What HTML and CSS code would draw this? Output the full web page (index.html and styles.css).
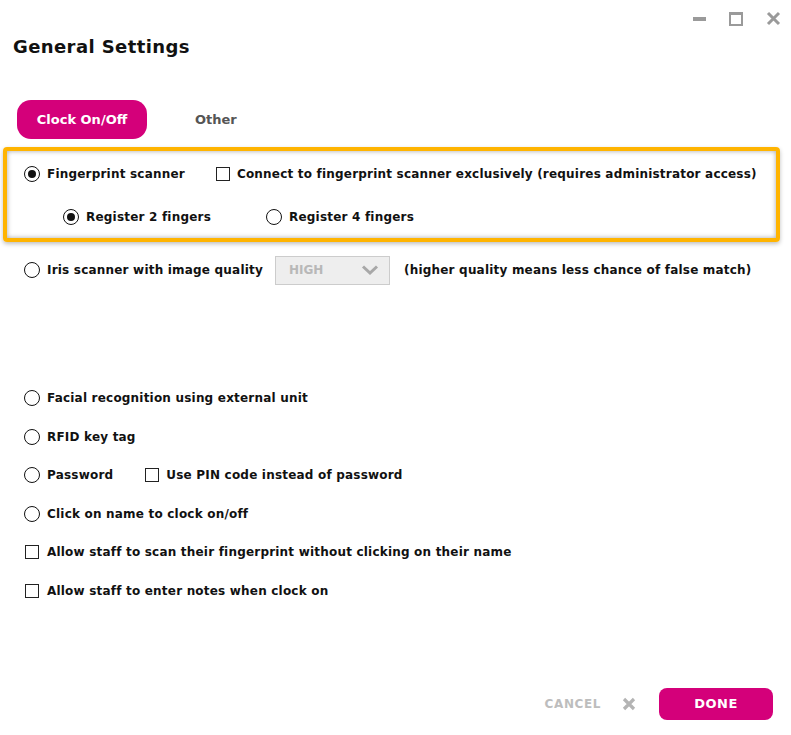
FILE: index.html
```html
<!DOCTYPE html>
<html lang="en">

<head>
    <meta charset="UTF-8">
    <meta name="viewport" content="width=device-width, initial-scale=1.0">
    <title>General Settings</title>
    <link rel="stylesheet" href="styles.css">
</head>

<body>
    <div class="window">
        <div class="window-controls">
            <span class="win-min"></span>
            <span class="win-max"></span>
            <svg class="win-close" width="15" height="15" viewBox="0 0 15 15">
                <path d="M2 2 L13 13 M13 2 L2 13" stroke="#9a9a9a" stroke-width="3" />
            </svg>
        </div>

        <h2 class="title">General Settings</h2>

        <div class="tabs">
            <span class="tab active">Clock On/Off</span>
            <span class="tab">Other</span>
        </div>

        <div class="highlight">
            <div class="row">
                <span class="radio checked"></span>
                <span class="label">Fingerprint scanner</span>
                <span class="check check-exclusive"></span>
                <span class="label">Connect to fingerprint scanner exclusively (requires administrator access)</span>
            </div>
            <div class="row sub-row">
                <span class="radio checked"></span>
                <span class="label fingers-2">Register 2 fingers</span>
                <span class="radio"></span>
                <span class="label">Register 4 fingers</span>
            </div>
        </div>

        <div class="row iris-row">
            <span class="radio"></span>
            <span class="label">Iris scanner with image quality</span>
            <div class="select">
                <span>HIGH</span>
                <svg width="18" height="10" viewBox="0 0 18 10">
                    <path d="M2 1.5 L9 8 L16 1.5" fill="none" stroke="#a8a8a8" stroke-width="3" />
                </svg>
            </div>
            <span class="label">(higher quality means less chance of false match)</span>
        </div>

        <div class="options">
            <div class="row">
                <span class="radio"></span>
                <span class="label">Facial recognition using external unit</span>
            </div>
            <div class="row">
                <span class="radio"></span>
                <span class="label">RFID key tag</span>
            </div>
            <div class="row">
                <span class="radio"></span>
                <span class="label">Password</span>
                <span class="check check-pin"></span>
                <span class="label">Use PIN code instead of password</span>
            </div>
            <div class="row">
                <span class="radio"></span>
                <span class="label">Click on name to clock on/off</span>
            </div>
            <div class="row">
                <span class="check check-left"></span>
                <span class="label">Allow staff to scan their fingerprint without clicking on their name</span>
            </div>
            <div class="row">
                <span class="check check-left"></span>
                <span class="label">Allow staff to enter notes when clock on</span>
            </div>
        </div>

        <div class="footer">
            <span class="cancel">CANCEL</span>
            <svg class="cancel-x" width="14" height="14" viewBox="0 0 14 14">
                <path d="M2 2 L12 12 M12 2 L2 12" stroke="#b4b4b4" stroke-width="3.2" />
            </svg>
            <span class="done">DONE</span>
        </div>
    </div>
</body>

</html>
```

FILE: styles.css
```css
* {
    box-sizing: border-box;
}

html,
body {
    margin: 0;
    padding: 0;
    background: #fff;
}

body {
    font-family: "DejaVu Sans", "Noto Sans", sans-serif;
    color: #111;
}

.window {
    width: 791px;
    height: 735px;
    display: flex;
    flex-direction: column;
    position: relative;
}

.window-controls {
    position: absolute;
    top: 11px;
    right: 10px;
    display: flex;
    align-items: center;
    gap: 23px;
}

.win-min {
    width: 13px;
    height: 4px;
    background: #9a9a9a;
}

.win-max {
    width: 14px;
    height: 14px;
    border: 2px solid #9a9a9a;
    border-top-width: 3px;
}

.title {
    margin: 36px 0 0 13px;
    font-size: 18px;
    font-weight: bold;
    line-height: 22px;
    letter-spacing: 0.4px;
    color: #111;
}

.tabs {
    display: flex;
    align-items: center;
    margin: 42px 0 0 17px;
}

.tab {
    font-size: 13px;
    font-weight: bold;
    color: #555;
    padding: 0 20px;
    height: 39px;
    line-height: 39px;
}

.tab.active {
    background: #d4007a;
    color: #fff;
    border-radius: 14px;
    width: 130px;
    text-align: center;
    padding: 0;
    margin-right: 28px;
}

.highlight {
    margin: 8px 11px 0 3px;
    height: 95px;
    border: 4px solid #ffb400;
    border-radius: 4px;
    box-shadow: inset 0 0 5px rgba(0, 0, 0, 0.35), 0 2px 4px rgba(0, 0, 0, 0.25);
    padding: 9px 0 0 17px;
}

.row {
    display: flex;
    align-items: center;
    height: 28px;
}

.label {
    font-size: 12px;
    font-weight: bold;
    letter-spacing: 0.2px;
    white-space: nowrap;
}

.radio {
    width: 16px;
    height: 16px;
    border: 1.5px solid #111;
    border-radius: 50%;
    margin-right: 7px;
    display: flex;
    align-items: center;
    justify-content: center;
    flex-shrink: 0;
}

.radio.checked::after {
    content: "";
    width: 8px;
    height: 8px;
    border-radius: 50%;
    background: #111;
}

.check {
    width: 14px;
    height: 14px;
    border: 1.5px solid #222;
    margin-right: 7px;
    flex-shrink: 0;
}

.check-exclusive {
    margin-left: 31px;
}

.sub-row {
    margin-top: 15px;
    padding-left: 39px;
}

.fingers-2 {
    margin-right: 55px;
}

.iris-row {
    margin: 14px 0 0 24px;
}

.select {
    width: 115px;
    height: 29px;
    margin: 0 14px 0 12px;
    background: #eeeeee;
    border: 1px solid #cccccc;
    display: flex;
    align-items: center;
    justify-content: space-between;
    padding: 0 10px 0 13px;
    font-size: 12px;
    font-weight: bold;
    color: #b8b8b8;
}

.options {
    margin: 100px 0 0 24px;
    display: flex;
    flex-direction: column;
    gap: 10.6px;
}

.check-pin {
    margin-left: 32px;
}

.check-left {
    margin-left: 1px;
    margin-right: 8px;
}

.footer {
    margin-top: auto;
    margin-bottom: 15px;
    display: flex;
    align-items: center;
    justify-content: flex-end;
    padding-right: 18px;
}

.cancel {
    font-size: 12px;
    font-weight: bold;
    color: #bdbdbd;
    letter-spacing: 0.6px;
}

.cancel-x {
    margin: 0 23px 0 21px;
}

.done {
    width: 114px;
    height: 32px;
    line-height: 32px;
    text-align: center;
    background: #d4007a;
    color: #fff;
    border-radius: 8px;
    font-size: 13px;
    font-weight: bold;
    letter-spacing: 0.5px;
}
```
